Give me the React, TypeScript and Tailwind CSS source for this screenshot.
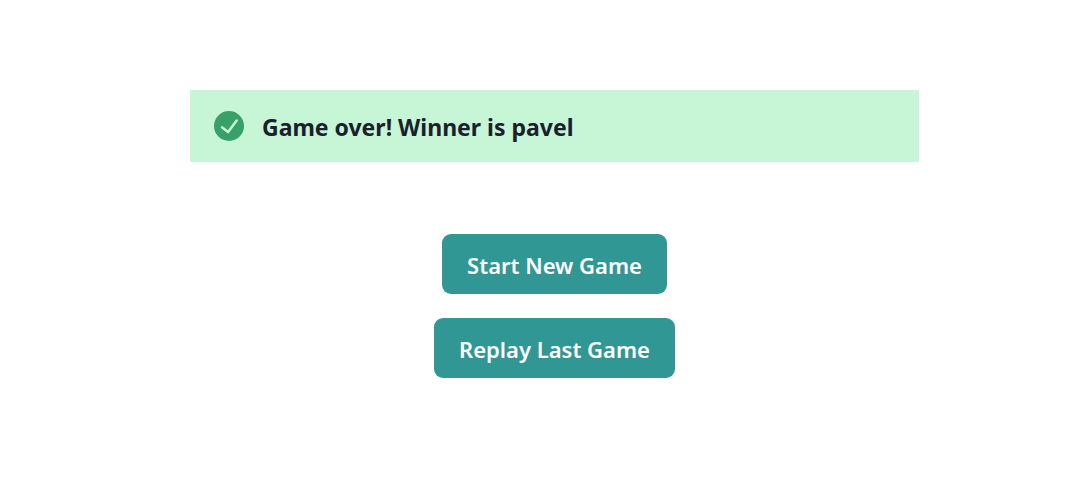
import React from "react";

function CheckCircle() {
  return (
    <svg viewBox="0 0 24 24" className="size-[30px] shrink-0 text-[#38a169]" aria-hidden="true">
      <path
        fill="currentColor"
        d="M12,0A12,12,0,1,0,24,12,12.014,12.014,0,0,0,12,0Zm6.927,8.2-6.845,9.289a1.011,1.011,0,0,1-1.43.188L5.764,13.769a1,1,0,1,1,1.25-1.562l4.076,3.261,6.227-8.451A1,1,0,1,1,18.927,8.2Z"
      />
    </svg>
  );
}

function ActionButton({ children }: { children: React.ReactNode }) {
  return (
    <button
      type="button"
      className="cursor-pointer rounded-[9px] bg-[#319795] px-[25px] pt-[13px] pb-[11px] text-[22px] leading-9 font-semibold text-white hover:bg-[#2c7a7b]"
    >
      {children}
    </button>
  );
}

export default function App() {
  return (
    <main className="flex flex-col items-center gap-[72px] bg-white pt-[90px] pr-[153px] pb-12 pl-[190px] font-['Noto_Sans','Open_Sans',sans-serif] text-[#1a202c]">
      <div role="alert" className="flex w-full items-center bg-[#c6f6d5] px-6 py-[17px]">
        <CheckCircle />
        <p className="ml-[18px] pt-[2px] text-[23px] leading-9 font-bold">Game over! Winner is pavel</p>
      </div>
      <div className="flex flex-col items-center gap-6">
        <ActionButton>Start New Game</ActionButton>
        <ActionButton>Replay Last Game</ActionButton>
      </div>
    </main>
  );
}
